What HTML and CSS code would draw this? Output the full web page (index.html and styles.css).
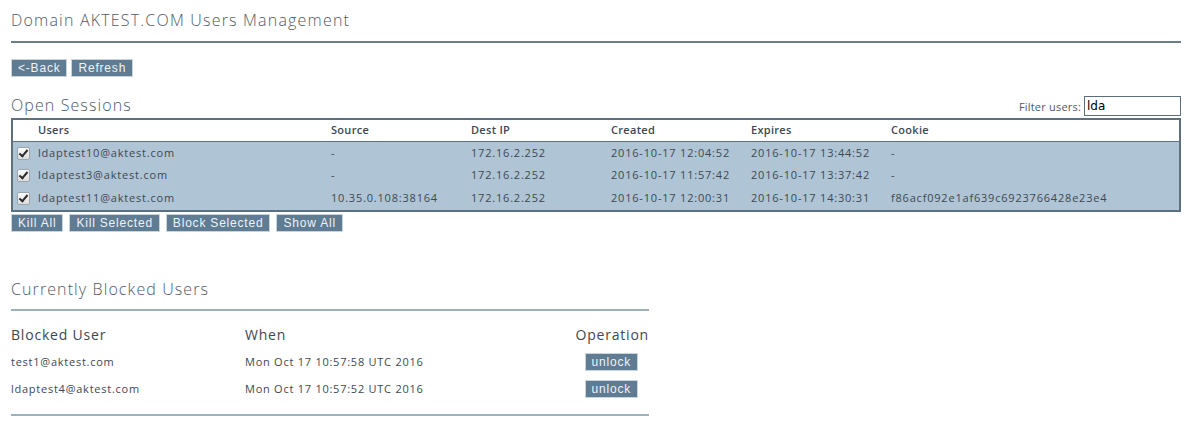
FILE: index.html
```html
<!DOCTYPE html>
<html>
<head>
<meta charset="utf-8">
<link rel="stylesheet" href="styles.css">
</head>
<body>
<div class="page">
  <h1 class="title">Domain AKTEST.COM Users Management</h1>
  <div class="toolbar">
    <button class="btn">&lt;-Back</button>
    <button class="btn">Refresh</button>
  </div>
  <div class="sess-head">
    <h2 class="subtitle">Open Sessions</h2>
    <label class="filter">Filter users: <input class="filter-input" type="text" value="lda"></label>
  </div>
  <table class="sessions">
    <thead>
      <tr>
        <th class="c-chk"></th>
        <th class="c-user">Users</th>
        <th class="c-col">Source</th>
        <th class="c-col">Dest IP</th>
        <th class="c-col">Created</th>
        <th class="c-col">Expires</th>
        <th>Cookie</th>
      </tr>
    </thead>
    <tbody>
      <tr>
        <td class="c-chk"><input class="chk" type="checkbox" checked></td>
        <td>ldaptest10@aktest.com</td>
        <td>-</td>
        <td>172.16.2.252</td>
        <td>2016-10-17 12:04:52</td>
        <td>2016-10-17 13:44:52</td>
        <td>-</td>
      </tr>
      <tr>
        <td class="c-chk"><input class="chk" type="checkbox" checked></td>
        <td>ldaptest3@aktest.com</td>
        <td>-</td>
        <td>172.16.2.252</td>
        <td>2016-10-17 11:57:42</td>
        <td>2016-10-17 13:37:42</td>
        <td>-</td>
      </tr>
      <tr>
        <td class="c-chk"><input class="chk" type="checkbox" checked></td>
        <td>ldaptest11@aktest.com</td>
        <td>10.35.0.108:38164</td>
        <td>172.16.2.252</td>
        <td>2016-10-17 12:00:31</td>
        <td>2016-10-17 14:30:31</td>
        <td>f86acf092e1af639c6923766428e23e4</td>
      </tr>
    </tbody>
  </table>
  <div class="actions">
    <button class="btn">Kill All</button>
    <button class="btn">Kill Selected</button>
    <button class="btn">Block Selected</button>
    <button class="btn">Show All</button>
  </div>

  <div class="blocked">
    <h2 class="subtitle blocked-title">Currently Blocked Users</h2>
    <div class="blocked-body">
      <table class="blocked-table">
        <thead>
          <tr>
            <th class="b-user">Blocked User</th>
            <th class="b-when">When</th>
            <th class="b-op">Operation</th>
          </tr>
        </thead>
        <tbody>
          <tr>
            <td>test1@aktest.com</td>
            <td>Mon Oct 17 10:57:58 UTC 2016</td>
            <td class="b-op"><button class="btn btn-small">unlock</button></td>
          </tr>
          <tr>
            <td>ldaptest4@aktest.com</td>
            <td>Mon Oct 17 10:57:52 UTC 2016</td>
            <td class="b-op"><button class="btn btn-small">unlock</button></td>
          </tr>
        </tbody>
      </table>
    </div>
  </div>
</div>
</body>
</html>
```

FILE: styles.css
```css
html, body {
  margin: 0;
  padding: 0;
  background: #ffffff;
}

body {
  font-family: "Open Sans", "Noto Sans", sans-serif;
  color: #3d4852;
  font-size: 11px;
  letter-spacing: 0.8px;
}

.page {
  padding: 0 11px;
}

.title {
  margin: 0;
  padding-top: 10px;
  height: 31px;
  box-sizing: content-box;
  font-size: 16px;
  font-weight: 300;
  line-height: 20px;
  color: #4f5a66;
  letter-spacing: 1.2px;
  border-bottom: 2px solid #6d7e8b;
}

.toolbar {
  display: flex;
  gap: 4px;
  margin-top: 16px;
}

.btn {
  font-family: "Liberation Sans", Arial, sans-serif;
  font-size: 12px;
  line-height: 14px;
  letter-spacing: 0.8px;
  color: #eef3f7;
  background: #5f7c93;
  border: 1px solid #c9d4dc;
  padding: 1px 6px;
  margin: 0;
  height: 18px;
  cursor: pointer;
}

.sess-head {
  display: flex;
  align-items: flex-end;
  justify-content: space-between;
  margin-top: 18px;
  height: 23px;
}

.subtitle {
  margin: 0;
  font-size: 16px;
  font-weight: 300;
  line-height: 20px;
  color: #4f5a66;
  letter-spacing: 1.1px;
}

.sess-head .subtitle {
  padding-bottom: 3px;
}

.filter {
  font-size: 11px;
  letter-spacing: 0.2px;
  color: #4f5a66;
  display: flex;
  align-items: center;
  gap: 3px;
  padding-bottom: 2px;
}

.filter-input {
  width: 97px;
  height: 20px;
  box-sizing: border-box;
  margin: 0;
  padding: 0 2px;
  border: 1px solid #5a6e7e;
  font-family: "DejaVu Sans", sans-serif;
  font-size: 12px;
  letter-spacing: 0;
  color: #000;
}

.sessions {
  width: 100%;
  border-collapse: collapse;
  border: 2px solid #5d7080;
}

.sessions th {
  background: #ffffff;
  text-align: left;
  font-weight: 600;
  font-size: 11px;
  letter-spacing: 0.3px;
  color: #3d4852;
  height: 19px;
  padding: 0 0 2px;
  border-bottom: 1px solid #5d7080;
}

.sessions td {
  background: #afc4d4;
  height: 21px;
  padding: 0 0 1px;
  color: #3d4852;
  white-space: nowrap;
}

.sessions tbody tr:last-child td {
  height: 22px;
  padding-bottom: 2px;
}

.sessions .c-chk {
  width: 21px;
  padding-left: 4px;
}

.sessions .c-user {
  width: 293px;
}

.sessions .c-col {
  width: 140px;
}

.chk {
  appearance: none;
  -webkit-appearance: none;
  position: relative;
  margin: 0;
  width: 13px;
  height: 13px;
  vertical-align: middle;
  border: 1px solid #9aa5ae;
  border-radius: 2px;
  background: linear-gradient(#fbfbfb, #dcdcdc);
}

.chk:checked::after {
  content: "";
  position: absolute;
  left: 3px;
  top: 0px;
  width: 3px;
  height: 7px;
  border-right: 2px solid #2b2b2b;
  border-bottom: 2px solid #2b2b2b;
  transform: rotate(40deg);
}

.actions {
  display: flex;
  gap: 6px;
  margin-top: 2px;
}

.blocked {
  width: 638px;
  margin-top: 47px;
}

.blocked-title {
  padding-bottom: 10px;
  border-bottom: 2px solid #9eb1bf;
}

.blocked-body {
  border-bottom: 2px solid #9eb1bf;
  padding-bottom: 12px;
}

.blocked-table {
  width: 100%;
  border-collapse: collapse;
}

.blocked-table th {
  font-size: 14px;
  font-weight: 500;
  letter-spacing: 0.8px;
  text-align: left;
  color: #3d4852;
  padding: 14px 0 4px;
}

.blocked-table td {
  height: 27px;
  padding: 0;
  color: #3d4852;
  letter-spacing: 0.75px;
}

.blocked-table .b-user {
  width: 234px;
}

.blocked-table .b-op {
  text-align: right;
}

.btn-small {
  margin-right: 11px;
  padding: 1px 6px;
}
```
